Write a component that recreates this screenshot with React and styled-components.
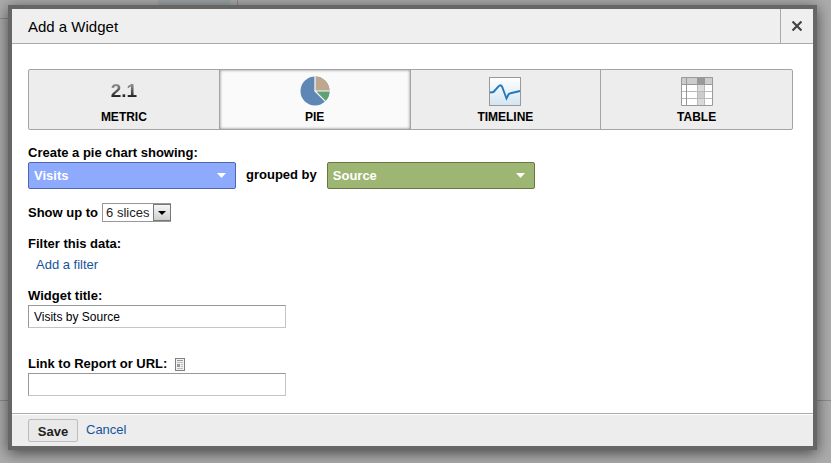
import { useState } from "react";
import styled, { createGlobalStyle, css } from "styled-components";

const GlobalStyle = createGlobalStyle`
  * {
    box-sizing: border-box;
  }
  body {
    margin: 0;
    background: #a8a8a8;
    font-family: "Liberation Sans", Arial, sans-serif;
    font-size: 13px;
    line-height: 16px;
    color: #000;
  }
`;

// dimmed dashboard lines show behind the dialog
const Page = styled.div`
  min-height: 100vh;
  padding: 5px 14px 13px 8px;
  background:
    linear-gradient(#9da4a8, #9da4a8) 158px 0 / 72px 6px no-repeat,
    linear-gradient(#8c8c8c, #8c8c8c) 237px 0 / 1px 18px no-repeat,
    linear-gradient(#8c8c8c, #8c8c8c) 0 18px / 238px 1px no-repeat,
    linear-gradient(#8c8c8c, #8c8c8c) 0 400px / 100% 1px no-repeat,
    #acacac;
`;

const Dialog = styled.div`
  border: 4px solid #666;
  background: #fff;
  box-shadow: 0 3px 14px rgba(0, 0, 0, 0.6);
`;

const Header = styled.header`
  display: flex;
  align-items: stretch;
  justify-content: space-between;
  height: 35px;
  border-bottom: 1px solid #aaa;
  background: #efefef;
`;

const Title = styled.h1`
  margin: 0;
  padding-left: 16px;
  font-size: 15px;
  font-weight: normal;
  line-height: 35px;
`;

const CloseButton = styled.button`
  display: flex;
  align-items: center;
  justify-content: center;
  width: 33px;
  padding: 0;
  border: 0;
  border-left: 1px solid #aaa;
  background: none;
  cursor: pointer;
`;

const Body = styled.div`
  padding: 25px 20px 17px 16px;
`;

const TypeBar = styled.div`
  display: grid;
  grid-template-columns: repeat(4, 1fr);
  border: 1px solid #a4a4a4;
  border-radius: 2px;
  background: #ededed;
`;

const TypeButton = styled.button`
  display: flex;
  flex-direction: column;
  align-items: center;
  height: 59px;
  padding: 6px 0 0;
  border: 0;
  border-right: 1px solid #a4a4a4;
  background: none;
  font: bold 12px/16px "Liberation Sans", Arial, sans-serif;
  color: #000;
  cursor: pointer;

  &:last-child {
    border-right: 0;
  }

  ${(props) =>
    props.$active &&
    css`
      background: #fafafa;
      box-shadow: inset 0 0 3px rgba(0, 0, 0, 0.5);
    `}
`;

const IconBox = styled.span`
  display: flex;
  align-items: center;
  justify-content: center;
  height: 30px;
  margin-bottom: 3px;
`;

const MetricSample = styled.span`
  font-size: 19px;
  line-height: 30px;
  background: linear-gradient(#999 25%, #222 70%);
  background-clip: text;
  color: transparent;
`;

const Label = styled.label`
  display: block;
  font-weight: bold;
`;

const Field = styled.div`
  margin-top: ${(props) => props.$space}px;
`;

const Row = styled.div`
  display: flex;
  align-items: ${(props) => props.$align || "center"};
  gap: ${(props) => props.$gap}px;
`;

const GroupLabel = styled(Label)`
  line-height: 28px;
`;

const Stack = styled.div`
  display: flex;
  flex-direction: column;
  gap: 1px;
`;

const SelectWrap = styled.span`
  position: relative;
  display: block;
`;

const PickerSelect = styled.select`
  appearance: none;
  display: block;
  width: 208px;
  height: 27px;
  padding: 0 24px 0 5px;
  border: 1px solid ${(props) => props.$edge};
  border-radius: 2px;
  background: ${(props) => props.$fill};
  font: bold 13px/16px "Liberation Sans", Arial, sans-serif;
  color: #fff;
`;

const PickerArrow = styled.svg`
  position: absolute;
  top: 11px;
  right: 10px;
  pointer-events: none;
`;

const SmallSelect = styled.select`
  appearance: none;
  display: block;
  width: 69px;
  height: 19px;
  padding: 0 18px 0 3px;
  border: 1px solid #999;
  border-radius: 0;
  background: #fff;
  font: 13px/16px "Liberation Sans", Arial, sans-serif;
  color: #222;
`;

const SmallArrow = styled.span`
  position: absolute;
  top: 1px;
  right: 0;
  display: flex;
  align-items: center;
  justify-content: center;
  width: 18px;
  height: 17px;
  border: 1px solid #777;
  background: linear-gradient(#f6f6f6, #cfcfcf);
  pointer-events: none;
`;

const Link = styled.a`
  color: #15549a;
  text-decoration: none;
`;

const FilterLine = styled.div`
  padding: 5px 0 0 8px;
`;

const TextInput = styled.input`
  display: block;
  width: 258px;
  height: 23px;
  padding: 0 5px;
  border: 1px solid #c4c4c4;
  border-top-color: #999;
  border-left-color: #999;
  font: 12px/16px "Liberation Sans", Arial, sans-serif;
  color: #000;
`;

const Footer = styled.footer`
  display: flex;
  align-items: center;
  gap: 8px;
  height: 33px;
  padding-left: 16px;
  border-top: 1px solid #aaa;
  background: #ededed;
  box-shadow: inset 0 1px #fff;
`;

const SaveButton = styled.button`
  width: 50px;
  height: 23px;
  padding: 3px 0 0;
  border: 1px solid #bcbcbc;
  border-radius: 2px;
  background: #e9e9e9;
  font: bold 13px/16px "Liberation Sans", Arial, sans-serif;
  color: #222;
  cursor: pointer;
`;

function PieIcon() {
  return (
    <svg width="30" height="30" viewBox="0 0 30 30">
      <circle cx="15" cy="15" r="14.5" fill="#5f87b5" />
      <path d="M15 15V.5A14.5 14.5 0 0 1 29.5 15Z" fill="#bfa78e" />
      <path d="M15 15H29.5A14.5 14.5 0 0 1 25.2 25.2Z" fill="#5da274" />
      <path d="M15 0V15H30M15 15L25.6 25.6" fill="none" stroke="#fafafa" strokeWidth="1.2" />
    </svg>
  );
}

function TimelineIcon() {
  return (
    <svg width="32" height="30" viewBox="0 0 32 30">
      <defs>
        <linearGradient id="sky" x1="0" y1="0" x2="0" y2="1">
          <stop offset="0" stopColor="#fff" />
          <stop offset="1" stopColor="#d3e5f1" />
        </linearGradient>
      </defs>
      <rect x=".5" y="1.5" width="31" height="28" fill="url(#sky)" stroke="#999" />
      <path
        d="M1 16.5L4.5 16L9.5 10.500Q11.500 8 13 10.500L17.500 22.500L19.500 18.500Q20 17.500 21.500 17.200L31 15"
        fill="none"
        stroke="#2478b8"
        strokeWidth="1.9"
      />
    </svg>
  );
}

function TableIcon() {
  return (
    <svg width="32" height="30" viewBox="0 0 32 30">
      <rect x="0" y="1" width="32" height="29" fill="#fff" />
      <rect x="0" y="1" width="32" height="7" fill="#ccc" />
      <rect x="17" y="1" width="7" height="7" fill="#999" />
      <rect x="17" y="8" width="7" height="22" fill="#dadada" />
      <rect x="17" y="15" width="7" height="7" fill="#ccc" />
      <path d="M1 15.500H31M1 22.500H31M16.500 8V29M23.500 8V29" stroke="#bbb" fill="none" />
      <path d="M.5 1.500H31.500V29.500H.5ZM1 8.500H31M5.500 2V29M16.500 2V8M23.500 2V8" stroke="#999" fill="none" />
    </svg>
  );
}

function ReportIcon() {
  return (
    <svg width="10" height="13" viewBox="0 0 10 13" role="img" aria-label="Report">
      <rect x=".5" y=".5" width="9" height="12" fill="#f2f2f2" stroke="#808080" />
      <path d="M2 2.500H8" stroke="#999" />
      <path d="M2 4.500H8" stroke="#bbb" />
      <rect x="2" y="6" width="3" height="3" fill="#999" />
      <path d="M6 6.500H8M6 8.500H8M2 10.500H8" stroke="#bbb" />
    </svg>
  );
}

const types = [
  { name: "METRIC", icon: <MetricSample>2.1</MetricSample> },
  { name: "PIE", icon: <PieIcon /> },
  { name: "TIMELINE", icon: <TimelineIcon /> },
  { name: "TABLE", icon: <TableIcon /> },
];

function Picker({ id, options, fill, edge }) {
  return (
    <SelectWrap>
      <PickerSelect id={id} $fill={fill} $edge={edge}>
        {options.map((option) => (
          <option key={option}>{option}</option>
        ))}
      </PickerSelect>
      <PickerArrow width="9" height="5" viewBox="0 0 9 5">
        <path d="M0 0H9L4.500 5Z" fill="#fff" />
      </PickerArrow>
    </SelectWrap>
  );
}

export default function App() {
  const [type, setType] = useState("PIE");
  const [title, setTitle] = useState("Visits by Source");
  const [url, setUrl] = useState("");

  return (
    <>
      <GlobalStyle />
      <Page>
        <Dialog role="dialog" aria-labelledby="dialog-title">
          <Header>
            <Title id="dialog-title">Add a Widget</Title>
            <CloseButton aria-label="Close">
              <svg width="10" height="10" viewBox="0 0 10 10">
                <path d="M.5 .5L9.5 9.5M9.5 .5L.5 9.5" stroke="#444" strokeWidth="2.2" />
              </svg>
            </CloseButton>
          </Header>
          <Body>
            <TypeBar>
              {types.map((item) => (
                <TypeButton
                  key={item.name}
                  $active={item.name === type}
                  aria-pressed={item.name === type}
                  onClick={() => setType(item.name)}
                >
                  <IconBox>{item.icon}</IconBox>
                  {item.name}
                </TypeButton>
              ))}
            </TypeBar>
            <Field $space={15}>
              <Row $gap={10} $align="flex-end">
                <Stack>
                  <Label htmlFor="metric">Create a pie chart showing:</Label>
                  <Picker id="metric" options={["Visits", "Pageviews"]} fill="#8eaafc" edge="#4f67b0" />
                </Stack>
                <GroupLabel htmlFor="dimension">grouped by</GroupLabel>
                <Picker id="dimension" options={["Source", "Medium"]} fill="#9db673" edge="#66783f" />
              </Row>
            </Field>
            <Field $space={14}>
              <Row $gap={4}>
                <Label htmlFor="slices">Show up to</Label>
                <SelectWrap>
                  <SmallSelect id="slices" defaultValue="6 slices">
                    <option>3 slices</option>
                    <option>4 slices</option>
                    <option>5 slices</option>
                    <option>6 slices</option>
                  </SmallSelect>
                  <SmallArrow>
                    <svg width="8" height="4" viewBox="0 0 8 4">
                      <path d="M0 0H8L4 4Z" fill="#000" />
                    </svg>
                  </SmallArrow>
                </SelectWrap>
              </Row>
            </Field>
            <Field $space={14}>
              <Label as="div">Filter this data:</Label>
              <FilterLine>
                <Link href="#filter">Add a filter</Link>
              </FilterLine>
            </Field>
            <Field $space={15}>
              <Stack>
                <Label htmlFor="title">Widget title:</Label>
                <TextInput id="title" value={title} onChange={(e) => setTitle(e.target.value)} />
              </Stack>
            </Field>
            <Field $space={28}>
              <Stack>
                <Row $gap={8}>
                  <Label htmlFor="url">Link to Report or URL:</Label>
                  <ReportIcon />
                </Row>
                <TextInput id="url" value={url} onChange={(e) => setUrl(e.target.value)} />
              </Stack>
            </Field>
          </Body>
          <Footer>
            <SaveButton>Save</SaveButton>
            <Link href="#cancel">Cancel</Link>
          </Footer>
        </Dialog>
      </Page>
    </>
  );
}
